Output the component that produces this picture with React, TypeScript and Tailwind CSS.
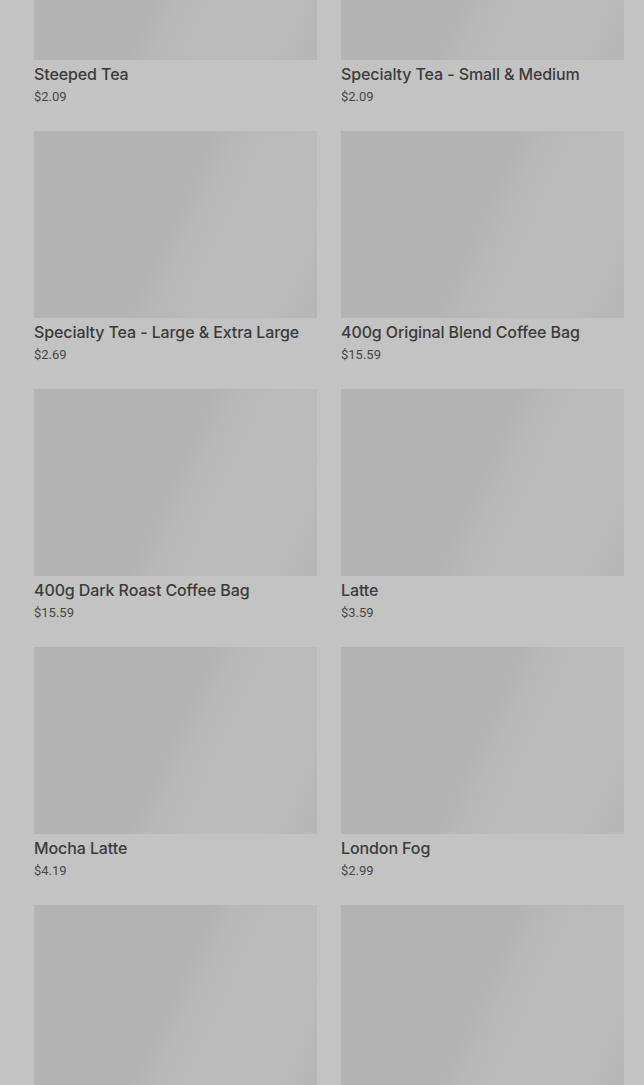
import React from "react";

const products = [
  { name: "Steeped Tea", price: "$2.09" },
  { name: "Specialty Tea - Small & Medium", price: "$2.09" },
  { name: "Specialty Tea - Large & Extra Large", price: "$2.69" },
  { name: "400g Original Blend Coffee Bag", price: "$15.59" },
  { name: "400g Dark Roast Coffee Bag", price: "$15.59" },
  { name: "Latte", price: "$3.59" },
  { name: "Mocha Latte", price: "$4.19" },
  { name: "London Fog", price: "$2.99" },
  { name: "", price: "" },
  { name: "", price: "" },
];

const ProductCard = ({ name, price }: { name: string; price: string }) => {
  return (
    <div className="flex flex-col">
      {/* placeholder image with shimmer */}
      <div className="h-[187px] w-full bg-[linear-gradient(115deg,#b3b3b3_0%,#b3b3b3_48%,#b8b8b8_56%,#bbbbbb_70%,#bbbbbb_85%,#b6b6b6_100%)]" />
      <p className="mt-[2px] font-['Inter',sans-serif] text-[16px] leading-[24px] font-medium tracking-[-0.1px] text-[#3b3b3b]">
        {name}
      </p>
      <p className="mt-[1px] font-['Roboto',sans-serif] text-[13px] leading-[20px] text-[#474747]">
        {price}
      </p>
    </div>
  );
};

export default function App() {
  return (
    <div className="h-[1085px] overflow-hidden bg-[#c3c3c3]">
      <div className="-mt-[127px] grid grid-cols-2 gap-x-6 gap-y-6 pl-[34px] pr-[20px]">
        {products.map((p, i) => (
          <ProductCard key={i} name={p.name} price={p.price} />
        ))}
      </div>
    </div>
  );
}
